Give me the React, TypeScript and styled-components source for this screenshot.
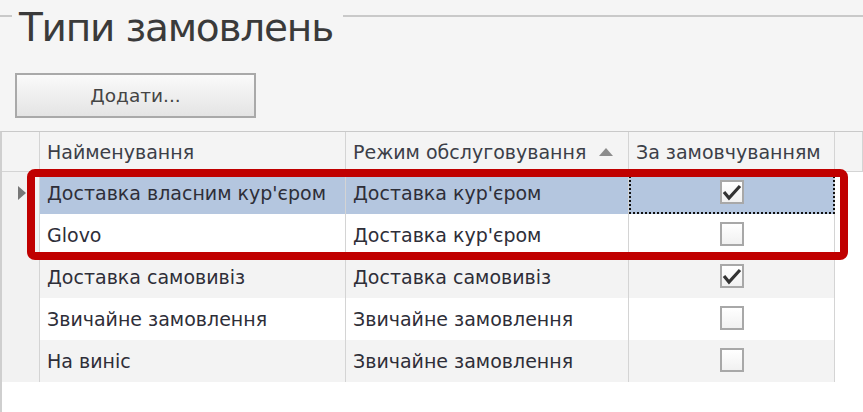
import React from 'react';
import styled, { createGlobalStyle } from 'styled-components';

const GlobalStyle = createGlobalStyle`
  html, body {
    margin: 0;
    padding: 0;
    background: #f5f5f5;
  }
`;

const Page = styled.div`
  position: relative;
  width: 863px;
  height: 412px;
  overflow: hidden;
  background: #f5f5f5;
  font-family: 'DejaVu Sans', Verdana, sans-serif;
  color: #333;
`;

const TitleBar = styled.div`
  display: flex;
  align-items: flex-start;
  height: 58px;
`;

const Rule = styled.div<{ $grow?: boolean }>`
  margin-top: 15px;
  height: 2px;
  background: #c9c9c9;
  width: 12px;
  flex: ${(p) => (p.$grow ? '1' : '0 0 12px')};
`;

const Title = styled.h1`
  margin: 4px 10px 0 7px;
  font-size: 39px;
  line-height: 48px;
  font-weight: normal;
  letter-spacing: -1.2px;
  color: #3a3a3a;
`;

const Toolbar = styled.div`
  display: flex;
  padding-left: 15px;
  margin-top: 15px;
`;

const Button = styled.button`
  width: 241px;
  height: 45px;
  border: 2px solid #a9a9a9;
  background: linear-gradient(#fafafa, #e4e4e4);
  font-family: inherit;
  font-size: 18.5px;
  color: #444;
  padding: 0;
`;

const Grid = styled.div`
  margin-top: 13px;
  height: 300px;
  background: #fff;
  border-top: 1px solid #c9c9c9;
  border-left: 2px solid #cfcfcf;
  display: grid;
  grid-template-columns: 38px 306px 283px 206px 1fr;
  grid-auto-rows: 42px;
  grid-template-rows: 40px;
  align-content: start;
`;

const HeadCell = styled.div`
  display: flex;
  align-items: center;
  padding-left: 7px;
  background: #f4f4f4;
  border-right: 1px solid #d4d4d4;
  border-bottom: 1px solid #d4d4d4;
  font-size: 19px;
  color: #3c3f48;
  white-space: nowrap;
  gap: 13px;
  &:last-child {
    border-right: none;
  }
`;

const Indicator = styled.div`
  display: flex;
  align-items: center;
  padding-left: 16px;
  background: #f2f2f2;
  border-right: 1px solid #d4d4d4;
`;

const Cell = styled.div<{ $bg: string; $center?: boolean; $focus?: boolean }>`
  display: flex;
  align-items: center;
  justify-content: ${(p) => (p.$center ? 'center' : 'flex-start')};
  padding-left: ${(p) => (p.$center ? '0' : '7px')};
  background: ${(p) => p.$bg};
  border-right: 1px solid #d4d4d4;
  font-size: 19px;
  color: #2e2e38;
  white-space: nowrap;
  ${(p) => (p.$focus ? 'outline: 2px dotted #111; outline-offset: -2px;' : '')}
`;

const Filler = styled.div``;

const Box = styled.div`
  width: 20px;
  height: 20px;
  border: 2px solid #a8a8a8;
  background: linear-gradient(#ffffff, #f1f1f1);
  display: flex;
  align-items: center;
  justify-content: center;
  margin-top: -3px;
`;

const Highlight = styled.div`
  position: absolute;
  left: 27px;
  top: 169px;
  width: 821px;
  height: 91px;
  box-sizing: border-box;
  border: 8px solid #c00000;
  border-radius: 8px;
  pointer-events: none;
`;

interface Row {
  name: string;
  mode: string;
  def: boolean;
}

const rows: Row[] = [
  { name: 'Доставка власним кур\'єром', mode: 'Доставка кур\'єром', def: true },
  { name: 'Glovo', mode: 'Доставка кур\'єром', def: false },
  { name: 'Доставка самовивіз', mode: 'Доставка самовивіз', def: true },
  { name: 'Звичайне замовлення', mode: 'Звичайне замовлення', def: false },
  { name: 'На виніс', mode: 'Звичайне замовлення', def: false },
];

function Check({ on }: { on: boolean }) {
  return (
    <Box>
      {on && (
        <svg width="20" height="20" viewBox="0 0 20 20">
          <path d="M2 10 L7 16 L18 4" fill="none" stroke="#333" strokeWidth="3.2" />
        </svg>
      )}
    </Box>
  );
}

export default function App() {
  return (
    <Page>
      <GlobalStyle />
      <TitleBar>
        <Rule />
        <Title>Типи замовлень</Title>
        <Rule $grow />
      </TitleBar>
      <Toolbar>
        <Button>Додати...</Button>
      </Toolbar>
      <Grid>
        <HeadCell />
        <HeadCell>Найменування</HeadCell>
        <HeadCell>
          Режим обслуговування
          <svg width="14" height="8" viewBox="0 0 14 8">
            <path d="M0 8 L7 0 L14 8 Z" fill="#8c8c8c" />
          </svg>
        </HeadCell>
        <HeadCell>За замовчуванням</HeadCell>
        <HeadCell />
        {rows.map((r, i) => {
          const selected = i === 0;
          const bg = selected ? '#b4c6df' : i % 2 === 0 ? '#f3f3f3' : '#ffffff';
          return (
            <React.Fragment key={r.name}>
              <Indicator>
                {selected && (
                  <svg width="8" height="14" viewBox="0 0 8 14">
                    <path d="M0 0 L8 7 L0 14 Z" fill="#777" />
                  </svg>
                )}
              </Indicator>
              <Cell $bg={bg}>{r.name}</Cell>
              <Cell $bg={bg}>{r.mode}</Cell>
              <Cell $bg={bg} $center $focus={selected}>
                <Check on={r.def} />
              </Cell>
              <Filler />
            </React.Fragment>
          );
        })}
      </Grid>
      <Highlight />
    </Page>
  );
}
